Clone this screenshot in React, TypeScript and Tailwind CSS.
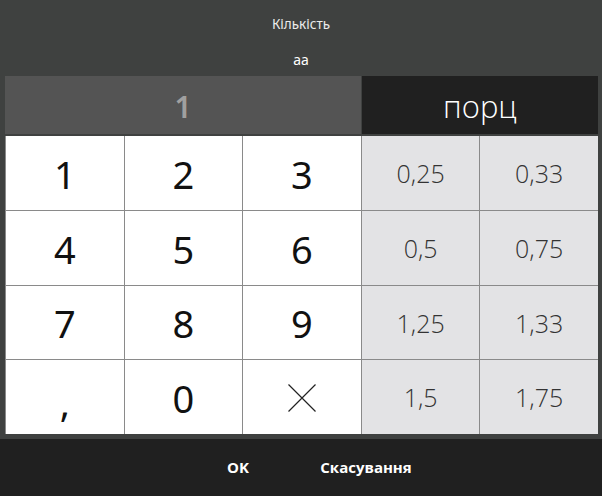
import React from "react";

const font = { fontFamily: '"Noto Sans", "Open Sans", sans-serif' };
const light = { fontFamily: '"Open Sans", "Noto Sans", sans-serif' };

function XIcon() {
  return (
    <svg width="30" height="30" viewBox="0 0 30 30" fill="none">
      <path d="M1.5 1.5 L28.5 28.5 M28.5 1.5 L1.5 28.5" stroke="#222" strokeWidth="1.2" />
    </svg>
  );
}

export default function App() {
  const rows: { keys: React.ReactNode[]; fr: string[] }[] = [
    { keys: ["1", "2", "3"], fr: ["0,25", "0,33"] },
    { keys: ["4", "5", "6"], fr: ["0,5", "0,75"] },
    { keys: ["7", "8", "9"], fr: ["1,25", "1,33"] },
    { keys: [",", "0", <XIcon key="x" />], fr: ["1,5", "1,75"] },
  ];
  return (
    <div className="w-[602px] h-[496px] bg-[#3f4140] flex flex-col overflow-hidden" style={font}>
      <div className="h-[48px] flex items-center justify-center text-[13.5px] text-[#ececec] pt-[1px]">Кількість</div>
      <div className="h-[28px] flex items-start justify-center text-[14px] text-white pt-[1px]">аа</div>
      <div className="ml-[5px] mr-[4px] h-[58px] flex gap-px">
        <div className="w-[356px] bg-[#545454] flex items-center justify-center text-[30px] font-semibold text-[#a0a0a0] pt-[2px]">1</div>
        <div className="flex-1 bg-[#202020] flex items-center justify-center text-[31px] font-light text-white pt-[2px]" style={light}>порц</div>
      </div>
      <div className="ml-[5px] mr-[4px] mt-[2px] h-[298px] bg-[#8a8a8a] grid grid-cols-5 grid-rows-4 gap-px pl-px">
        {rows.map((r, i) => (
          <React.Fragment key={i}>
            {r.keys.map((k, j) => (
              <div
                key={"k" + j}
                className={
                  "bg-white flex items-center justify-center text-[38px] text-[#111] leading-none " +
                  (i === 3 && j === 0 ? "pt-[10px]" : "pt-[2px]")
                }
              >
                {k}
              </div>
            ))}
            {r.fr.map((f, j) => (
              <div key={"f" + j} className="bg-[#e3e3e5] flex items-center justify-center text-[25px] font-light text-[#333] pt-[2px]" style={light}>
                {f}
              </div>
            ))}
          </React.Fragment>
        ))}
      </div>
      <div className="h-[5px]" />
      <div className="flex-1 bg-[#202020] flex items-center pl-[188px] pb-[1px]">
        <div className="w-[100px] text-center text-[15px] font-bold text-white" style={light}>OK</div>
        <div className="w-[156px] text-center text-[15px] font-bold text-white" style={light}>Скасування</div>
      </div>
    </div>
  );
}
